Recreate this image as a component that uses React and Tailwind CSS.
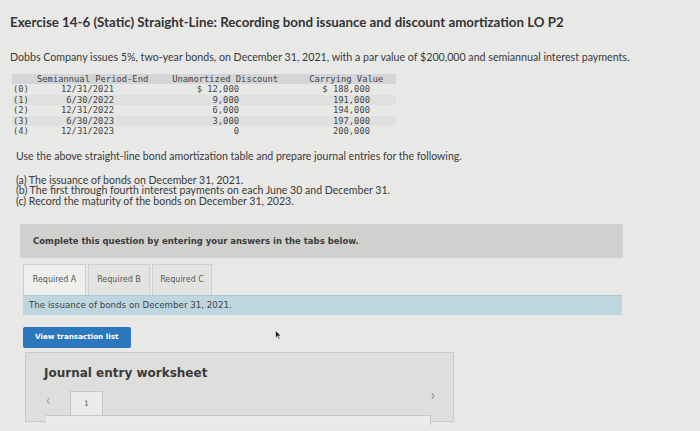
import React from "react";

const rows = [
  ["(0)", "12/31/2021", "$ 12,000", "$ 188,000"],
  ["(1)", "6/30/2022", "9,000", "191,000"],
  ["(2)", "12/31/2022", "6,000", "194,000"],
  ["(3)", "6/30/2023", "3,000", "197,000"],
  ["(4)", "12/31/2023", "0", "200,000"],
];

export default function App() {
  return (
    <div className="relative w-[700px] h-[431px] overflow-hidden bg-[#e8e9e7] text-[#3a3a3a] font-['Lato',sans-serif]">
      <div className="pl-[10px] pt-[13px]">
        <h1 className="text-[13.3px] leading-[18px] font-bold text-[#333]">
          Exercise 14-6 (Static) Straight-Line: Recording bond issuance and discount amortization LO P2
        </h1>
        <p className="mt-[19px] text-[10.65px] leading-[14px]">
          Dobbs Company issues 5%, two-year bonds, on December 31, 2021, with a par value of $200,000 and semiannual interest payments.
        </p>
        <div className="mt-[10px] font-['DejaVu_Sans_Mono',monospace] text-[8.8px] text-[#444]">
          <div className="ml-[2px] w-[384px] h-[10px] leading-[10px] bg-[#d3d5d9] flex">
            <span className="ml-[25px]">Semiannual Period-End</span>
            <span className="ml-[24px]">Unamortized Discount</span>
            <span className="ml-[31px]">Carrying Value</span>
          </div>
          {rows.map((r, i) => (
            <div
              key={i}
              className={`flex h-[10.5px] leading-[10.5px] ml-[2px] w-[384px] ${i % 2 === 1 ? "bg-[#dfe0df]" : ""}`}
            >
              <span className="w-[18px] pl-[1px]">{r[0]}</span>
              <span className="w-[84px] text-right">{r[1]}</span>
              <span className="w-[125px] text-right">{r[2]}</span>
              <span className="w-[131px] text-right">{r[3]}</span>
            </div>
          ))}
        </div>
        <p className="ml-[6px] mt-[12px] text-[10.55px] leading-[14px]">
          Use the above straight-line bond amortization table and prepare journal entries for the following.
        </p>
        <div className="ml-[6px] mt-[12px] text-[10.55px] leading-[10.5px]">
          <p>(a) The issuance of bonds on December 31, 2021.</p>
          <p>(b) The first through fourth interest payments on each June 30 and December 31.</p>
          <p>(c) Record the maturity of the bonds on December 31, 2023.</p>
        </div>
      </div>

      <div className="ml-[20px] mt-[18px] w-[603px] h-[34px] bg-[#d0d1cf] flex items-center pl-[13px] font-['DejaVu_Sans',sans-serif] font-bold text-[8.5px] text-[#3c3c3c]">
        Complete this question by entering your answers in the tabs below.
      </div>

      <div className="ml-[23px] mt-[6px] flex gap-[2px] font-['DejaVu_Sans',sans-serif] text-[8px] text-[#555]">
        <div className="w-[63px] h-[31px] bg-[#efefed] border border-b-0 border-[#cfd0ce] flex items-center justify-center">
          Required A
        </div>
        <div className="w-[62px] h-[31px] bg-[#e3e4e2] border border-b-0 border-[#cfd0ce] flex items-center justify-center">
          Required B
        </div>
        <div className="w-[60px] h-[31px] bg-[#e3e4e2] border border-b-0 border-[#cfd0ce] flex items-center justify-center">
          Required C
        </div>
      </div>
      <div className="ml-[23px] w-[599px] h-[20px] bg-[#bdd6df] border-t border-[#b3c7cf] flex items-center pl-[6px] font-['DejaVu_Sans',sans-serif] text-[8.7px] text-[#444]">
        The issuance of bonds on December 31, 2021.
      </div>

      <div className="ml-[23px] mt-[12px] w-[108px] h-[21px] bg-[#2b78c0] rounded-[2px] flex items-center pl-[12px] font-['DejaVu_Sans',sans-serif] font-bold text-[7.2px] text-white">
        View transaction list
      </div>

      <div className="ml-[25px] mt-[4px] w-[429px] h-[70px] bg-[#dedfdd] border border-[#cacbc9] relative">
        <div className="pl-[18px] pt-[12px] font-['DejaVu_Sans',sans-serif] font-bold text-[12px] leading-[16px] text-[#3a3a3a]">
          Journal entry worksheet
        </div>
        <div className="flex items-start mt-[10px] pl-[20px]">
          <span className="mt-[1px] w-[24px] text-[#999] text-[15px] leading-[14px]">&lsaquo;</span>
          <div className="w-[33px] h-[24px] bg-[#ebebea] border border-b-0 border-[#c8c9c7] flex items-center justify-center font-['DejaVu_Sans',sans-serif] text-[7.5px] text-[#555]">
            1
          </div>
        </div>
        <div className="ml-[20px] w-[385px] h-[10px] bg-[#ebebea] border-t border-r border-[#c8c9c7]"></div>
        <span className="absolute right-[18px] top-[34px] text-[#888] text-[15px] leading-[14px]">&rsaquo;</span>
      </div>

      <svg className="absolute left-[275px] top-[330px]" width="7" height="10" viewBox="0 0 7 10">
        <path d="M0.5 0.5 L0.5 8 L2.4 6.3 L3.8 9.3 L5 8.8 L3.6 5.9 L6 5.8 Z" fill="#222" stroke="#eee" strokeWidth="0.6" />
      </svg>
    </div>
  );
}
